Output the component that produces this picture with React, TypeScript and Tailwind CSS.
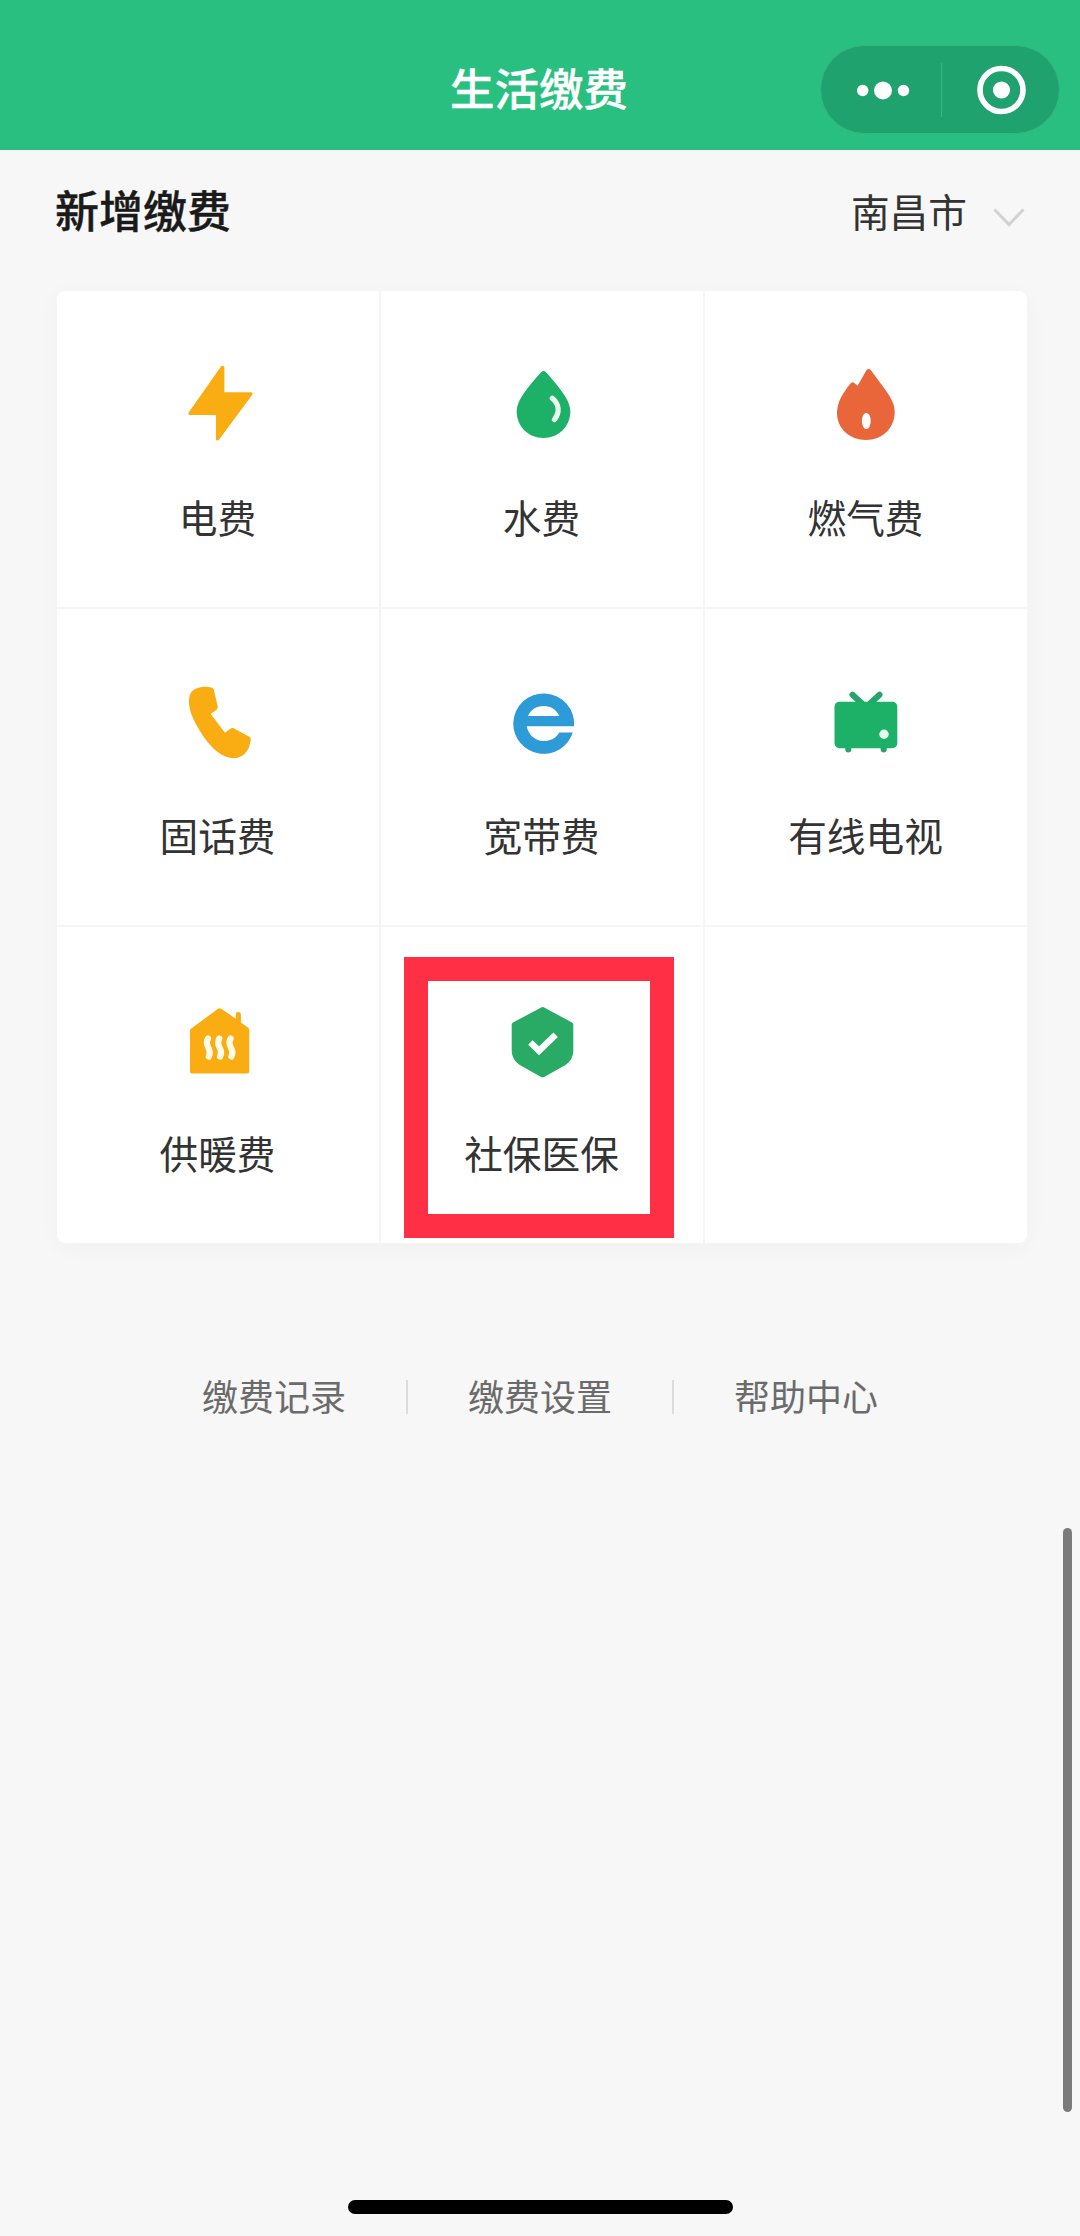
import type { ReactNode } from 'react'
import { clsx } from 'clsx'

function Icon({ children }: { children: ReactNode }) {
  return (
    <svg width={80} height={80} viewBox="0 0 80 80" fill="none">
      {children}
    </svg>
  )
}

function BoltIcon() {
  return (
    <Icon>
      <path
        d="M44.3 3.4L12 49.4H39.5V75L73 29.9H44.8V3.4Z"
        fill="#f9ad12"
        stroke="#f9ad12"
        strokeWidth="3.2"
        strokeLinejoin="round"
      />
    </Icon>
  )
}

function DropIcon() {
  return (
    <Icon>
      <path
        d="M39.4 8C40.6 6.5 42.6 6.5 43.8 8C48 12.5 53.5 19 58 25C63.5 32.5 68.3 39.5 68.3 47.5C68.3 62.5 56.5 74 41.5 74C26.5 74 14.7 62.5 14.7 47.5C14.7 39.5 19.5 32.5 25 25C29.5 19 35 12.5 39.4 8Z"
        fill="#1db167"
      />
      <path d="M50.3 34.3C57.6 40.5 57.6 48.5 52.5 55.5" stroke="#e9fbef" strokeWidth="5.3" strokeLinecap="round" />
    </Icon>
  )
}

function FlameIcon() {
  return (
    <Icon>
      <path
        d="M40.6 6C41.9 4.6 43.5 4.6 44.7 6.1L59.5 26C65.2 34 68.7 40.5 68.7 48C68.7 64.5 56 76 40 76C23.5 76 11 64.5 11 49C11 38 17.5 28 24.5 19.5C25.8 18 27.2 18 28.6 19.3L31.6 21.8Z"
        fill="#e9663b"
      />
      <ellipse cx="40.3" cy="57" rx="4.4" ry="8" fill="white" />
    </Icon>
  )
}

function PhoneIcon() {
  return (
    <Icon>
      <path
        d="M11 17C11.5 12 13.5 8.8 17.5 6.8C23 4.3 29.5 4.2 34 5.8C35.2 6.3 35.6 7 35.9 8.2L39.7 24.3C40 25.8 39.7 26.8 38.5 27.7L32.7 32L47 50.7L52.5 46.8C53.7 46 54.8 45.9 56 46.5L71.3 54.8C72.6 55.6 73 56.6 72.7 58.2C71.7 64 70.3 68.3 66.7 71.8C61.5 76.7 55 77.2 48 74.8C36.5 70.5 26.5 57.5 19 44C13.8 34.5 10.3 26 11 17Z"
        fill="#f9ad12"
      />
    </Icon>
  )
}

function BroadbandIcon() {
  return (
    <Icon>
      <path
        fillRule="evenodd"
        d="M72.1 44.3A30.5 30.5 0 1 0 11.2 41.3A30.5 30.5 0 0 0 70.8 50.4H57.3C54 56 48.5 59 41.7 59C33 59 26.3 53 24.8 44.3ZM26 34C28.5 28 34 24 41.7 24C49.3 24 54.8 28 57.3 34Z"
        fill="#2d9bd8"
      />
    </Icon>
  )
}

function TvIcon() {
  return (
    <Icon>
      <path
        d="M26.5 12.8L36 21.5M53.5 12.8L44 21.5M22.3 64V67.5M57.7 64V67.5"
        stroke="#25a56b"
        strokeWidth="6"
        strokeLinecap="round"
      />
      <rect x="8.5" y="19.7" width="62.8" height="46.6" rx="5" fill="#1db167" />
      <circle cx="58" cy="52.3" r="4.7" fill="#e4faee" />
    </Icon>
  )
}

function HeatingIcon() {
  return (
    <Icon>
      <path
        d="M39.7 9.1C41 8.1 42.4 8.1 43.7 9.1L57.7 18.8V14.5C57.7 11.2 62.9 11.2 62.9 14.5V22.5L70 27.6C70.8 28.2 71.2 29 71.2 30V71.3C71.2 72.7 70.4 73.5 69 73.5H14.2C12.8 73.5 12 72.7 12 71.3V30.8C12 29.8 12.4 29 13.2 28.4Z"
        fill="#f9ad12"
      />
      {[0, 11.3, 22.6].map((x) => (
        <path
          key={x}
          transform={`translate(${x} 0)`}
          d="M30 38.5C27.8 42.5 28.7 45 30.5 48C32.3 51 32.3 53.5 30.8 56.5"
          stroke="#fffbe6"
          strokeWidth="6.2"
          strokeLinecap="round"
        />
      ))}
    </Icon>
  )
}

function ShieldIcon() {
  return (
    <Icon>
      <path
        d="M38.7 7.7C40 6.9 41.3 6.9 42.6 7.7L70 22.5C70.9 23 71.3 23.7 71.3 24.8V49.5C71.3 56.5 68.8 61.5 63.5 65L42.6 76.7C41.3 77.5 40 77.5 38.7 76.7L17.8 65C12.5 61.5 9.7 56.5 9.7 49.5V24.8C9.7 23.7 10.1 23 11 22.5Z"
        fill="#29ab65"
      />
      <path d="M28.4 42.5L37 50.7L53.7 34.7" stroke="white" strokeWidth="6.4" />
    </Icon>
  )
}

interface Service {
  label: string
  icon?: ReactNode
  highlighted?: boolean
}

const services: Service[] = [
  { label: '电费', icon: <BoltIcon /> },
  { label: '水费', icon: <DropIcon /> },
  { label: '燃气费', icon: <FlameIcon /> },
  { label: '固话费', icon: <PhoneIcon /> },
  { label: '宽带费', icon: <BroadbandIcon /> },
  { label: '有线电视', icon: <TvIcon /> },
  { label: '供暖费', icon: <HeatingIcon /> },
  { label: '社保医保', icon: <ShieldIcon />, highlighted: true },
  { label: '' },
]

const footerLinks = ['缴费记录', '缴费设置', '帮助中心']

function ServiceCell({ service }: { service: Service }) {
  return (
    <div className="relative flex flex-col items-center bg-white pr-px pt-[73px]">
      {service.icon}
      {service.label && (
        <span className="mt-11 text-[38.7px] leading-[56px] text-[#333333]">{service.label}</span>
      )}
      {service.highlighted && (
        <div className="absolute left-[23px] top-[30px] h-[281px] w-[270px] border-[24px] border-[#ff3045]" />
      )}
    </div>
  )
}

function Header() {
  return (
    <header className="relative flex h-[150px] justify-center bg-[#29bf80] pr-[2px] pt-[55px]">
      <h1 className="text-[44.5px] font-medium leading-[64px] text-white [-webkit-text-stroke:0.4px_white]">生活缴费</h1>
      {/* Mini program capsule */}
      <div className="absolute right-5 top-[45px] flex h-[89px] w-[240px] items-center rounded-full border border-[#35b583] bg-[#20a26f]">
        <svg width="120" height="60" viewBox="0 0 120 60" fill="white">
          <circle cx="41.7" cy="30.5" r="5.7" />
          <circle cx="62" cy="30.5" r="9" />
          <circle cx="82.5" cy="30.5" r="5.7" />
        </svg>
        <div className="h-[54px] w-px bg-[#3cb384]" />
        <svg width="117" height="60" viewBox="0 0 117 60">
          <circle cx="59.5" cy="30" r="21.5" fill="none" stroke="white" strokeWidth="5.6" />
          <circle cx="59.5" cy="30" r="8.6" fill="white" />
        </svg>
      </div>
    </header>
  )
}

export default function App() {
  return (
    <div
      lang="zh-CN"
      className="relative h-[2236px] w-[1080px] overflow-hidden bg-[#f7f7f7] font-['Noto_Sans_CJK_SC',sans-serif]"
    >
      <Header />

      <main className="pl-[57px] pr-[53px]">
        <div className="flex h-[141px] items-start justify-between pr-[2px] pt-[27px]">
          <h2 className="-ml-[2px] text-[44px] font-medium leading-[64px] text-[#1a1a1a] [-webkit-text-stroke:0.4px_#1a1a1a]">
            新增缴费
          </h2>
          <div className="flex items-center pt-px text-[38.7px] leading-[64px] text-[#333333]">
            南昌市
            <svg className="ml-[26px] mt-4" width="32" height="20" viewBox="0 0 32 20" fill="none">
              <path d="M1.5 1.5L16 16.5L30.5 1.5" stroke="#d2d2d2" strokeWidth="3" />
            </svg>
          </div>
        </div>

        <div className="grid h-[952px] grid-cols-3 grid-rows-3 gap-[2px] overflow-hidden rounded-lg bg-[#f5f5f5] shadow-[0_4px_24px_rgba(0,0,0,0.03)]">
          {services.map((service, i) => (
            <ServiceCell key={i} service={service} />
          ))}
        </div>

        <nav className="mt-[126px] flex items-center justify-center pr-[4px]">
          {footerLinks.map((link, i) => (
            <div
              key={link}
              className={clsx(
                'flex items-center',
                i > 0 && 'before:mx-[60px] before:mt-[3px] before:h-[34px] before:w-[2px] before:bg-[#dcdcdc]'
              )}
            >
              <span className="text-[36px] leading-[52px] text-[#6b6b6b]">{link}</span>
            </div>
          ))}
        </nav>
      </main>

      {/* Scrollbar */}
      <div className="absolute right-2 top-[1528px] h-[584px] w-[9px] rounded-full bg-[#7b7b7b]" />
      {/* Home indicator */}
      <div className="absolute bottom-[22px] left-[348px] h-[14px] w-[385px] rounded-full bg-black" />
    </div>
  )
}
